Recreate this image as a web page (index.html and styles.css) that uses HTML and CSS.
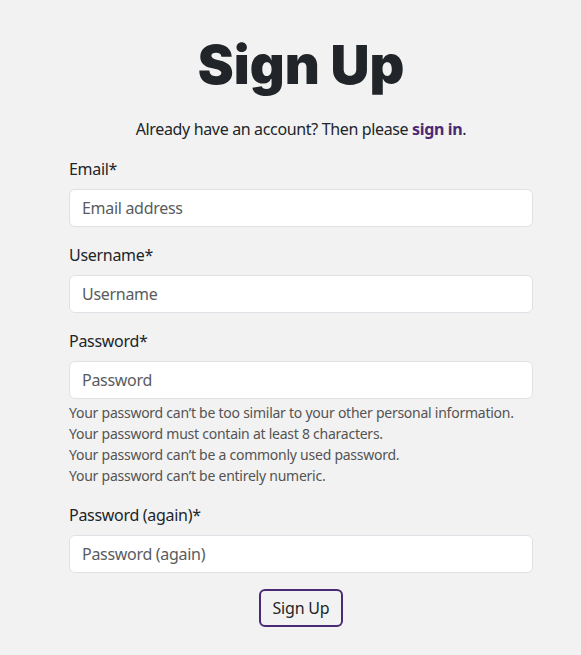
FILE: index.html
```html
<!DOCTYPE html>
<html lang="en">
<head>
<meta charset="utf-8">
<title>Sign Up</title>
<link rel="stylesheet" href="styles.css">
</head>
<body>
<main class="wrap">
  <h1 class="title">Sign Up</h1>
  <p class="lead">Already have an account? Then please <a class="link" href="#">sign in</a>.</p>
  <form class="form">
    <div class="field">
      <label class="label">Email*</label>
      <input class="input" type="email" placeholder="Email address">
    </div>
    <div class="field">
      <label class="label">Username*</label>
      <input class="input" type="text" placeholder="Username">
    </div>
    <div class="field">
      <label class="label">Password*</label>
      <input class="input" type="password" placeholder="Password">
      <ul class="help">
        <li>Your password can’t be too similar to your other personal information.</li>
        <li>Your password must contain at least 8 characters.</li>
        <li>Your password can’t be a commonly used password.</li>
        <li>Your password can’t be entirely numeric.</li>
      </ul>
    </div>
    <div class="field">
      <label class="label">Password (again)*</label>
      <input class="input" type="password" placeholder="Password (again)">
    </div>
    <div class="actions">
      <button class="btn" type="button">Sign Up</button>
    </div>
  </form>
</main>
</body>
</html>
```
FILE: styles.css
```css
* { box-sizing: border-box; }
html, body { margin: 0; padding: 0; background: #f2f2f2; }
body {
  font-family: "Noto Sans", "Liberation Sans", sans-serif;
  font-size: 16px;
  line-height: 1.5;
  color: #212529;
}
.wrap {
  width: 464px;
  margin-left: 69px;
  padding-top: 33px;
}
.title {
  margin: 0;
  text-align: center;
  font-family: Inter, "DejaVu Sans", sans-serif;
  font-weight: 900;
  font-size: 54px;
  line-height: 64px;
  color: #212529;
}
.lead {
  margin: 20px 0 0;
  text-align: center;
  letter-spacing: -0.35px;
}
.link { color: #4b2a75; font-weight: 700; text-decoration: none; }
.form { margin-top: 16px; }
.field { display: flex; flex-direction: column; margin-bottom: 16px; }
.label { margin-bottom: 8px; letter-spacing: -0.3px; }
.input {
  height: 38px;
  padding: 0 12px;
  font: inherit;
  letter-spacing: -0.3px;
  color: #212529;
  background: #fff;
  border: 1px solid #dee2e6;
  border-radius: 6px;
}
.input::placeholder { color: #595c5f; }
.help {
  list-style: none;
  margin: 3px 0 1px;
  padding: 0;
  font-size: 14px;
  line-height: 21px;
  letter-spacing: -0.25px;
  color: #545454;
}
.actions { display: flex; justify-content: center; }
.btn {
  height: 38px;
  padding: 0 12px;
  font: inherit;
  letter-spacing: -0.2px;
  color: #212529;
  background: transparent;
  border: 2px solid #4b2a75;
  border-radius: 6px;
}
```
